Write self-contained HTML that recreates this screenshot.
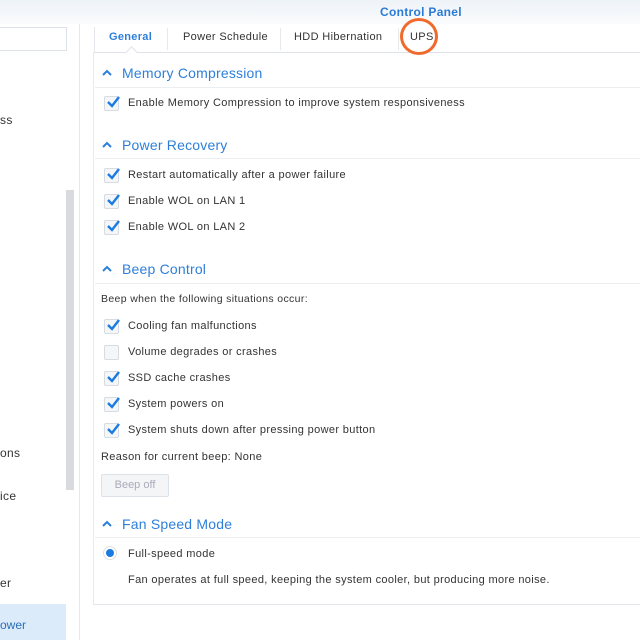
<!DOCTYPE html><html><head><style>
body{margin:0;width:640px;height:640px;overflow:hidden;background:#fff;font-family:"Liberation Sans",sans-serif;position:relative}
.a{position:absolute;white-space:nowrap}
.hdr{left:0;top:0;width:640px;height:24px;background:linear-gradient(#eef3f8,#fafbfc)}
.t{font-size:11px;color:#333;letter-spacing:0.35px}
.h{font-size:14px;color:#2e7fd9;letter-spacing:0.2px}
.cb{position:absolute;width:13px;height:13px;border:1px solid #d6dce2;background:#f4f6f8;border-radius:2px}
.cb svg{position:absolute;left:1px;top:-2px}
.car{position:absolute}
</style></head><body>
<div class="a hdr"></div>
<div class="a" style="left:380px;top:5px;font-size:12px;font-weight:bold;color:#2a7bd6;letter-spacing:0.3px">Control Panel</div>
<div class="a" style="left:-2px;top:27px;width:67px;height:22px;border:1px solid #dde2e8;background:#fff"></div>
<div class="a" style="left:79px;top:24px;width:1px;height:616px;background:#e4e7eb"></div>
<div class="a t" style="left:0;top:113px;font-size:12px">ss</div>
<div class="a t" style="left:0;top:446px;font-size:12px">ons</div>
<div class="a t" style="left:0;top:489px;font-size:12px">ice</div>
<div class="a t" style="left:0;top:576px;font-size:12px">er</div>
<div class="a" style="left:0;top:604px;width:66px;height:36px;background:#dcebfa"></div>
<div class="a" style="left:0;top:618px;font-size:12px;color:#2a6fbf">ower</div>
<div class="a" style="left:66px;top:190px;width:8px;height:300px;background:#d8dadd"></div>
<div class="a" style="left:94px;top:52px;width:546px;height:1px;background:#dfe3e8"></div>
<div class="a" style="left:94px;top:27px;width:1px;height:26px;background:#e4e7eb"></div>
<div class="a" style="left:93px;top:52px;width:1px;height:553px;background:#e8ebee"></div>
<div class="a" style="left:93px;top:604px;width:547px;height:1px;background:#e3e6ea"></div>
<div class="a" style="left:109px;top:31px;font-size:11px;font-weight:bold;color:#2e7fd9;letter-spacing:0.3px">General</div>
<div class="a" style="left:167px;top:28px;width:1px;height:22px;background:#e6e9ec"></div>
<div class="a t" style="left:183px;top:31px">Power Schedule</div>
<div class="a" style="left:280px;top:28px;width:1px;height:22px;background:#e6e9ec"></div>
<div class="a t" style="left:294px;top:31px">HDD Hibernation</div>
<div class="a" style="left:398px;top:28px;width:1px;height:22px;background:#e6e9ec"></div>
<div class="a t" style="left:410px;top:31px">UPS</div>
<div class="a" style="left:400px;top:18px;width:38px;height:37px;border:3px solid #f06a2c;border-radius:50%;box-sizing:border-box"></div>
<div class="a" style="left:127px;top:48px;width:8px;height:8px;background:#fff;border-left:1px solid #dfe3e8;border-top:1px solid #dfe3e8;transform:rotate(45deg)"></div>

<svg class="car" style="left:102px;top:69px" width="10" height="7"><path d="M1 6L5 2L9 6" stroke="#2e7fd9" stroke-width="2" fill="none"/></svg><div class="a h" style="left:122px;top:65px">Memory Compression</div>
<div class="a" style="left:95px;top:87px;width:545px;height:1px;background:#eceff2"></div>
<div class="cb" style="left:104px;top:96px"><svg width="14" height="14"><path d="M2 7L6 11L13 2" stroke="#1b7be0" stroke-width="2.4" fill="none"/></svg></div><div class="a t" style="left:128px;top:97px">Enable Memory Compression to improve system responsiveness</div>

<svg class="car" style="left:102px;top:141px" width="10" height="7"><path d="M1 6L5 2L9 6" stroke="#2e7fd9" stroke-width="2" fill="none"/></svg><div class="a h" style="left:122px;top:137px">Power Recovery</div>
<div class="a" style="left:95px;top:158px;width:545px;height:1px;background:#eceff2"></div>
<div class="cb" style="left:104px;top:168px"><svg width="14" height="14"><path d="M2 7L6 11L13 2" stroke="#1b7be0" stroke-width="2.4" fill="none"/></svg></div><div class="a t" style="left:128px;top:169px">Restart automatically after a power failure</div>
<div class="cb" style="left:104px;top:194px"><svg width="14" height="14"><path d="M2 7L6 11L13 2" stroke="#1b7be0" stroke-width="2.4" fill="none"/></svg></div><div class="a t" style="left:128px;top:195px">Enable WOL on LAN 1</div>
<div class="cb" style="left:104px;top:220px"><svg width="14" height="14"><path d="M2 7L6 11L13 2" stroke="#1b7be0" stroke-width="2.4" fill="none"/></svg></div><div class="a t" style="left:128px;top:221px">Enable WOL on LAN 2</div>

<svg class="car" style="left:102px;top:265px" width="10" height="7"><path d="M1 6L5 2L9 6" stroke="#2e7fd9" stroke-width="2" fill="none"/></svg><div class="a h" style="left:122px;top:261px">Beep Control</div>
<div class="a" style="left:95px;top:283px;width:545px;height:1px;background:#eceff2"></div>
<div class="a t" style="left:101px;top:293px;font-size:10.5px">Beep when the following situations occur:</div>
<div class="cb" style="left:104px;top:319px"><svg width="14" height="14"><path d="M2 7L6 11L13 2" stroke="#1b7be0" stroke-width="2.4" fill="none"/></svg></div><div class="a t" style="left:128px;top:320px">Cooling fan malfunctions</div>
<div class="cb" style="left:104px;top:345px"></div><div class="a t" style="left:128px;top:346px">Volume degrades or crashes</div>
<div class="cb" style="left:104px;top:371px"><svg width="14" height="14"><path d="M2 7L6 11L13 2" stroke="#1b7be0" stroke-width="2.4" fill="none"/></svg></div><div class="a t" style="left:128px;top:372px">SSD cache crashes</div>
<div class="cb" style="left:104px;top:397px"><svg width="14" height="14"><path d="M2 7L6 11L13 2" stroke="#1b7be0" stroke-width="2.4" fill="none"/></svg></div><div class="a t" style="left:128px;top:398px">System powers on</div>
<div class="cb" style="left:104px;top:423px"><svg width="14" height="14"><path d="M2 7L6 11L13 2" stroke="#1b7be0" stroke-width="2.4" fill="none"/></svg></div><div class="a t" style="left:128px;top:424px">System shuts down after pressing power button</div>
<div class="a t" style="left:101px;top:451px">Reason for current beep: None</div>
<div class="a" style="left:101px;top:474px;width:68px;height:23px;border:1px solid #dde2e8;background:#f3f5f7;border-radius:2px;box-sizing:border-box;font-size:11px;color:#aab;text-align:center;line-height:21px">Beep off</div>

<svg class="car" style="left:102px;top:520px" width="10" height="7"><path d="M1 6L5 2L9 6" stroke="#2e7fd9" stroke-width="2" fill="none"/></svg><div class="a h" style="left:122px;top:516px">Fan Speed Mode</div>
<div class="a" style="left:95px;top:537px;width:545px;height:1px;background:#eceff2"></div>
<div class="a" style="left:103px;top:546px;width:14px;height:14px;border-radius:50%;border:1px solid #dde2e8;background:#fff;box-sizing:border-box"></div>
<div class="a" style="left:106px;top:549px;width:8px;height:8px;border-radius:50%;background:#1b7be0"></div>
<div class="a t" style="left:128px;top:548px">Full-speed mode</div>
<div class="a t" style="left:128px;top:574px">Fan operates at full speed, keeping the system cooler, but producing more noise.</div>
</body></html>
